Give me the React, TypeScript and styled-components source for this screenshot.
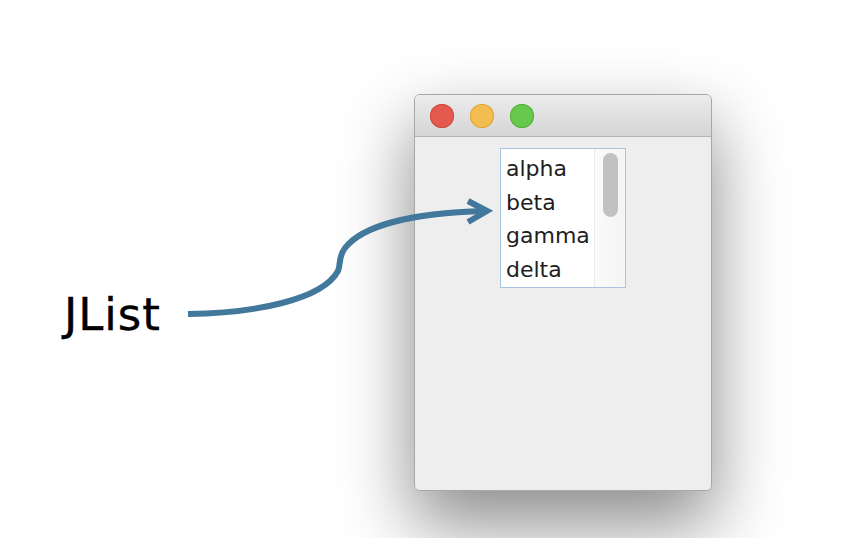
import React from 'react';
import styled, { createGlobalStyle } from 'styled-components';

const GlobalStyle = createGlobalStyle`
    html, body {
        margin: 0;
        background: #ffffff;
    }
`

const Stage = styled.div`
    position: relative;
    width: 866px;
    height: 538px;
    box-sizing: border-box;
    padding: 94px 154px 0 64px;
    display: flex;
    justify-content: space-between;
    align-items: flex-start;
    overflow: hidden;
    background: #ffffff;
`

const Label = styled.div`
    margin-top: 195px;
    font-family: "DejaVu Sans", Verdana, sans-serif;
    font-size: 45px;
    line-height: 52px;
    letter-spacing: 1px;
    color: #000;
    -webkit-text-stroke: 0.4px #000;
`

const Window = styled.div`
    width: 298px;
    height: 397px;
    box-sizing: border-box;
    display: flex;
    flex-direction: column;
    border: 1px solid #a8a8a8;
    border-radius: 6px;
    background: #ececec;
    box-shadow: 0 32px 70px 2px rgba(0, 0, 0, 0.45);
    overflow: hidden;
`

const TitleBar = styled.div`
    height: 41px;
    flex-shrink: 0;
    display: flex;
    align-items: center;
    gap: 16px;
    padding-left: 15px;
    background: linear-gradient(#ececec, #d5d5d5);
    border-bottom: 1px solid #b4b4b4;
`

const Light = styled.span<{ fill: string; ring: string }>`
    width: 24px;
    height: 24px;
    border-radius: 50%;
    background: ${(props) => props.fill};
    box-shadow: inset 0 0 0 1px ${(props) => props.ring};
`

const Content = styled.div`
    flex: 1;
    padding: 11px 0 0 85px;
    background: #eeeeee;
`

const ListBox = styled.div`
    width: 126px;
    height: 140px;
    box-sizing: border-box;
    display: flex;
    border: 1px solid #a9c4e2;
    background: #ffffff;
`

const Items = styled.ul`
    flex: 1;
    margin: 0;
    padding: 3px 0 0 5px;
    list-style: none;
    font-family: "DejaVu Sans", "Lucida Grande", sans-serif;
    font-size: 22px;
    line-height: 33.5px;
    color: #1e1e1e;
    overflow: hidden;
    white-space: nowrap;
`

const Track = styled.div`
    width: 31px;
    flex-shrink: 0;
    display: flex;
    justify-content: center;
    padding-top: 4px;
    box-sizing: border-box;
    border-left: 1px solid #ececec;
    background: linear-gradient(90deg, #fafafa, #f4f4f4);
`

const Thumb = styled.div`
    width: 15px;
    height: 64px;
    border-radius: 8px;
    background: #c1c1c1;
`

const Arrow = styled.svg`
    position: absolute;
    left: 0;
    top: 0;
    pointer-events: none;
`

const items = ['alpha', 'beta', 'gamma', 'delta'];

const App = () => {
    return (
        <Stage>
            <GlobalStyle />
            <Label>JList</Label>
            <Window>
                <TitleBar>
                    <Light fill="#e55a4e" ring="#cf4a3f" />
                    <Light fill="#f4bd4f" ring="#dca43a" />
                    <Light fill="#66c94b" ring="#52b03a" />
                </TitleBar>
                <Content>
                    <ListBox>
                        <Items>
                            {items.map(item => <li key={item}>{item}</li>)}
                        </Items>
                        <Track>
                            <Thumb />
                        </Track>
                    </ListBox>
                </Content>
            </Window>
            <Arrow width="866" height="538" viewBox="0 0 866 538">
                <g fill="none" stroke="#41789c" strokeWidth="6" strokeLinecap="butt" strokeLinejoin="miter">
                    <path d="M188,314 C255,313 322,300 338,271 C341,264 338,257 345,248 C362,226 410,213 485,211" />
                    <path d="M468,201 L487,211 L468,222" />
                </g>
            </Arrow>
        </Stage>
    );
}

export default App;
